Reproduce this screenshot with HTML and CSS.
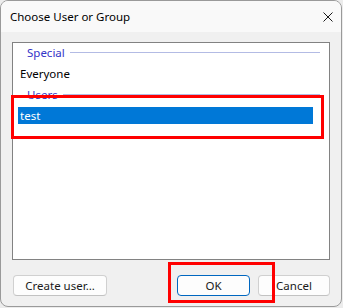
FILE: index.html
```html
<!DOCTYPE html>
<html lang="en">
<head>
    <meta charset="UTF-8">
    <title>Choose User or Group</title>
    <link rel="stylesheet" href="styles.css">
</head>
<body>
    <div class="window">
        <div class="titlebar">
            <span class="title">Choose User or Group</span>
            <svg class="close" width="10" height="10" viewBox="0 0 10 10">
                <path d="M0.5 0.5 L9.5 9.5 M9.5 0.5 L0.5 9.5" stroke="#1a1a1a" stroke-width="1" fill="none"/>
            </svg>
        </div>
        <div class="content">
            <div class="list">
                <div class="group"><span>Special</span><i></i></div>
                <div class="item">Everyone</div>
                <div class="group"><span>Users</span><i></i></div>
                <div class="item selected">test</div>
            </div>
            <div class="buttons">
                <button class="btn create">Create user…</button>
                <div class="spacer"></div>
                <button class="btn ok">OK</button>
                <button class="btn cancel">Cancel</button>
            </div>
        </div>
        <div class="mark mark-list"></div>
        <div class="mark mark-ok"></div>
    </div>
</body>
</html>
```
FILE: styles.css
```css
body {
    margin: 0;
    background: #ececec;
    font-family: "Noto Sans", "Liberation Sans", sans-serif;
    font-size: 11.5px;
    color: #000;
}
.window {
    position: relative;
    width: 340px;
    height: 305px;
    border: 1px solid #9a9a9a;
    border-radius: 8px;
    background: #f0f0f0;
    overflow: hidden;
    display: flex;
    flex-direction: column;
}
.titlebar {
    height: 31px;
    background: #f9f9f9;
    display: flex;
    align-items: center;
    padding: 0 8px 0 9px;
    flex-shrink: 0;
}
.title {
    flex: 1;
    font-size: 11.5px;
    padding-bottom: 1px;
}
.content {
    flex: 1;
    display: flex;
    flex-direction: column;
    padding: 10px 11px 11px 11px;
}
.list {
    height: 215px;
    border: 1px solid #828282;
    background: #fff;
    padding: 1px 0 0 5px;
    display: flex;
    flex-direction: column;
    gap: 4px;
}
.group {
    height: 17px;
    display: flex;
    align-items: center;
    padding-left: 9px;
    padding-right: 9px;
    color: #3434c8;
}
.group span {
    padding-right: 5px;
}
.group i {
    flex: 1;
    height: 1px;
    background: #b3bbe4;
}
.item {
    height: 17px;
    line-height: 17px;
    padding-left: 2px;
    margin-right: 16px;
}
.selected {
    background: #0078d7;
    color: #fff;
}
.buttons {
    margin-top: 15px;
    display: flex;
    gap: 8px;
}
.spacer {
    flex: 1;
}
.btn {
    height: 21px;
    font-family: inherit;
    font-size: 11.5px;
    background: #fdfdfd;
    border: 1px solid #d0d0d0;
    border-bottom-color: #c2c2c2;
    border-radius: 4px;
    padding: 0;
    color: #1a1a1a;
}
.create {
    width: 94px;
    margin-left: 1px;
}
.ok {
    width: 73px;
    border-color: #0067c0;
}
.cancel {
    width: 72px;
}
.mark {
    position: absolute;
    border: 3px solid #ff0000;
    box-sizing: border-box;
}
.mark-list {
    left: 10px;
    top: 94px;
    width: 313px;
    height: 44px;
}
.mark-ok {
    left: 167px;
    top: 261px;
    width: 107px;
    height: 41px;
}
```
